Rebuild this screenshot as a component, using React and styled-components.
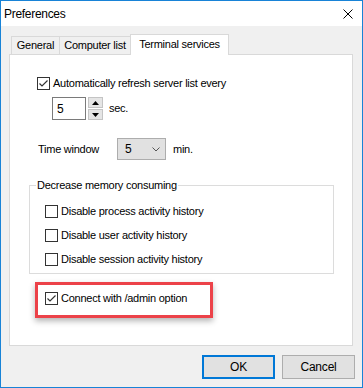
import React from "react";
import styled, { createGlobalStyle } from "styled-components";

const GlobalStyle = createGlobalStyle`
  html, body { margin: 0; padding: 0; background: #ffffff; }
  body {
    font-family: "Liberation Sans", Arial, sans-serif;
    font-size: 11px;
    letter-spacing: -0.25px;
    color: #000;
  }
  * { box-sizing: border-box; }
`;

const Window = styled.div`
  width: 363px;
  height: 388px;
  border: 1px solid #1883d7;
  background: #f0f0f0;
  display: flex;
  flex-direction: column;
`;

const TitleBar = styled.div`
  flex: none;
  height: 25px;
  background: #fff;
  display: flex;
  align-items: center;
  justify-content: space-between;
  padding: 0 9px 0 3px;
`;

const Title = styled.span`
  font-size: 12px;
  letter-spacing: -0.3px;
  line-height: 14px;
`;

const Body = styled.div`
  flex: 1;
  display: flex;
  flex-direction: column;
  padding: 8px 9px 8px 8px;
`;

const TabStrip = styled.div`
  display: flex;
  align-items: flex-end;
  height: 21px;
  padding-left: 2px;
  margin-bottom: -1px;
`;

const Tab = styled.div`
  position: relative;
  z-index: ${(p) => (p.$active ? 2 : 0)};
  width: ${(p) => p.$w}px;
  height: ${(p) => (p.$active ? 21 : 19)}px;
  margin-left: ${(p) => (p.$first ? 0 : -1)}px;
  background: ${(p) => (p.$active ? "#ffffff" : "#f0f0f0")};
  border: 1px solid #d9d9d9;
  border-bottom: ${(p) => (p.$active ? "none" : "1px solid #d9d9d9")};
  display: flex;
  align-items: center;
  justify-content: center;
  padding-bottom: ${(p) => (p.$active ? 2 : 0)}px;
  line-height: 13px;
  white-space: nowrap;
`;

const Panel = styled.div`
  position: relative;
  z-index: 1;
  flex: 1;
  background: #fff;
  border: 1px solid #d9d9d9;
  display: flex;
  flex-direction: column;
  align-items: flex-start;
  padding-top: 22px;
`;

const CheckRow = styled.label`
  display: flex;
  align-items: center;
  gap: 3px;
  height: 13px;
  line-height: 13px;
  white-space: nowrap;
  margin-left: ${(p) => p.$ml || 0}px;
`;

const Box = styled.span`
  flex: none;
  width: 13px;
  height: 13px;
  border: 1px solid #333333;
  background: #ffffff;
  display: flex;
  align-items: center;
  justify-content: center;
`;

const Check = ({ checked, children, ml }) => (
  <CheckRow $ml={ml}>
    <Box>
      {checked && (
        <svg width="11" height="11" viewBox="0 0 11 11">
          <polyline
            points="1.5,5.5 4,8 9.5,2.5"
            fill="none"
            stroke="#333"
            strokeWidth="1.2"
          />
        </svg>
      )}
    </Box>
    <span>{children}</span>
  </CheckRow>
);

const SpinRow = styled.div`
  display: flex;
  align-items: center;
  margin: 7px 0 0 42px;
`;

const Edit = styled.div`
  width: 34px;
  height: 23px;
  border: 1px solid #7a7a7a;
  background: #fff;
  display: flex;
  align-items: center;
  padding-left: 4px;
  font-size: 12px;
`;

const SpinCol = styled.div`
  display: flex;
  flex-direction: column;
  gap: 1px;
  margin-left: 2px;
  width: 15px;
  height: 23px;
`;

const SpinBtn = styled.div`
  flex: 1;
  background: #e5e5e5;
  border: 1px solid #c4c4c4;
  display: flex;
  align-items: center;
  justify-content: center;
`;

const Unit = styled.span`
  margin-left: ${(p) => p.$ml}px;
  line-height: 13px;
`;

const TimeRow = styled.div`
  display: flex;
  align-items: center;
  margin: 18px 0 0 28px;
`;

const FieldLabel = styled.span`
  width: 79px;
  line-height: 13px;
`;

const Combo = styled.div`
  width: 49px;
  height: 22px;
  background: #e1e1e1;
  border: 1px solid #adadad;
  display: flex;
  align-items: center;
  justify-content: space-between;
  padding: 0 5px 0 7px;
  font-size: 12px;
`;

const GroupBox = styled.div`
  margin: 25px 0 0 19px;
  width: 305px;
  border: 1px solid #dcdcdc;
  padding: 0 0 7px 15px;
  display: flex;
  flex-direction: column;
  align-items: flex-start;
`;

const GroupLabel = styled.div`
  margin: -7px 0 0 -9px;
  padding: 0 1px;
  background: #fff;
  line-height: 13px;
  white-space: nowrap;
`;

const GroupList = styled.div`
  margin-top: 13px;
  display: flex;
  flex-direction: column;
  gap: 11px;
`;

const Highlight = styled.div`
  margin: 8px 0 0 25px;
  width: 178px;
  height: 36px;
  border: 3px solid #ec4249;
  padding: 7px 0 0 7px;
  box-shadow: 0 3px 6px rgba(0, 0, 0, 0.3);
`;

const ButtonRow = styled.div`
  display: flex;
  justify-content: flex-end;
  gap: 7px;
  margin: 9px -2px 0 0;
`;

const Button = styled.button`
  width: 73px;
  height: 24px;
  padding: 0;
  font-family: inherit;
  font-size: 12px;
  letter-spacing: -0.2px;
  color: #000;
  background: #e1e1e1;
  border: ${(p) => (p.$primary ? "2px solid #0078d7" : "1px solid #adadad")};
`;

const Arrow = ({ up }) => (
  <svg width="7" height="4" viewBox="0 0 7 4">
    <polygon points={up ? "0,4 7,4 3.5,0" : "0,0 7,0 3.5,4"} fill="#000" />
  </svg>
);

export default function App() {
  return (
    <>
      <GlobalStyle />
      <Window>
        <TitleBar>
          <Title>Preferences</Title>
          <svg width="10" height="10" viewBox="0 0 10 10">
            <path d="M0.5 0.5 L9.5 9.5 M9.5 0.5 L0.5 9.5" stroke="#000" strokeWidth="1" />
          </svg>
        </TitleBar>
        <Body>
          <TabStrip>
            <Tab $first $w={49}>General</Tab>
            <Tab $w={72}>Computer list</Tab>
            <Tab $active $w={99}>Terminal services</Tab>
          </TabStrip>
          <Panel>
            <Check checked ml={27}>Automatically refresh server list every</Check>
            <SpinRow>
              <Edit>5</Edit>
              <SpinCol>
                <SpinBtn><Arrow up /></SpinBtn>
                <SpinBtn><Arrow /></SpinBtn>
              </SpinCol>
              <Unit $ml={6}>sec.</Unit>
            </SpinRow>
            <TimeRow>
              <FieldLabel>Time window</FieldLabel>
              <Combo>
                <span>5</span>
                <svg width="8" height="5" viewBox="0 0 8 5">
                  <polyline points="0.5,0.5 4,4 7.5,0.5" fill="none" stroke="#555" strokeWidth="1" />
                </svg>
              </Combo>
              <Unit $ml={7}>min.</Unit>
            </TimeRow>
            <GroupBox>
              <GroupLabel>Decrease memory consuming</GroupLabel>
              <GroupList>
                <Check>Disable process activity history</Check>
                <Check>Disable user activity history</Check>
                <Check>Disable session activity history</Check>
              </GroupList>
            </GroupBox>
            <Highlight>
              <Check checked>Connect with /admin option</Check>
            </Highlight>
          </Panel>
          <ButtonRow>
            <Button $primary>OK</Button>
            <Button>Cancel</Button>
          </ButtonRow>
        </Body>
      </Window>
    </>
  );
}
